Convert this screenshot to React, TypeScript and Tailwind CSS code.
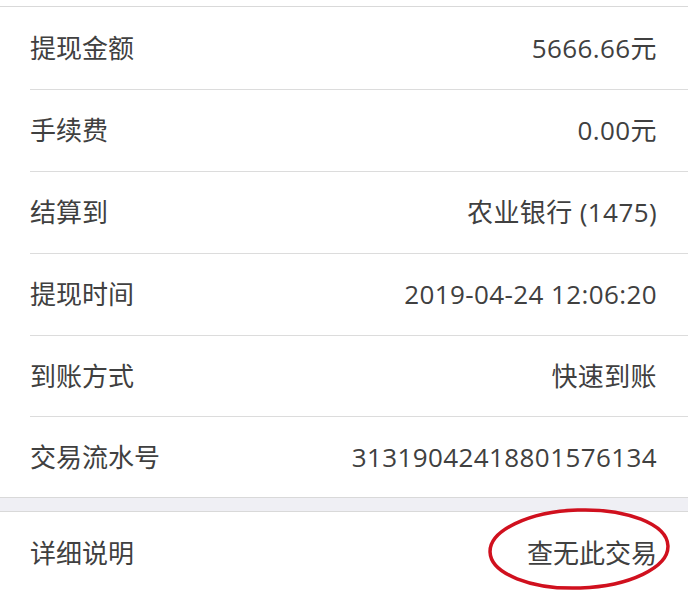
const rows = [
  { label: "提现金额", value: "5666.66元", h: "h-[83px]" },
  { label: "手续费", value: "0.00元", h: "h-[82px]" },
  { label: "结算到", value: "农业银行 (1475)", h: "h-[82px]" },
  { label: "提现时间", value: "2019-04-24 12:06:20", h: "h-[82px]" },
  { label: "到账方式", value: "快速到账", h: "h-[81px]" },
];

export default function App() {
  return (
    <div
      className="w-[688px] h-[591px] overflow-hidden bg-white text-[#404040] text-[26px]"
      style={{ fontFamily: '"Open Sans", "Noto Sans CJK SC", sans-serif' }}
    >
      <div className="h-[6px]" />
      <div className="border-t border-[#d9d9d9]">
        {rows.map((r) => (
          <div key={r.label} className={`ml-[30px] pr-[31px] border-b border-[#dcdcdc] flex items-center justify-between ${r.h}`}>
            <span>{r.label}</span>
            <span className="tracking-[0.4px]">{r.value}</span>
          </div>
        ))}
        <div className="ml-[30px] pr-[31px] h-[80px] flex items-center justify-between">
          <span>交易流水号</span>
          <span className="tracking-[0.4px]">31319042418801576134</span>
        </div>
      </div>
      <div className="h-[15px] bg-[#efeff4] border-y border-[#d9d9d9]" />
      <div className="relative ml-[30px] pr-[31px] h-[82px] flex items-center justify-between">
        <span>详细说明</span>
        <span>查无此交易</span>
        <svg className="absolute left-[456px] top-[-5px]" width="186" height="86" viewBox="0 0 186 86">
          <ellipse cx="93" cy="42" rx="89" ry="39" fill="none" stroke="#d0101e" strokeWidth="3.5" transform="rotate(-2 93 42)" />
        </svg>
      </div>
    </div>
  );
}
